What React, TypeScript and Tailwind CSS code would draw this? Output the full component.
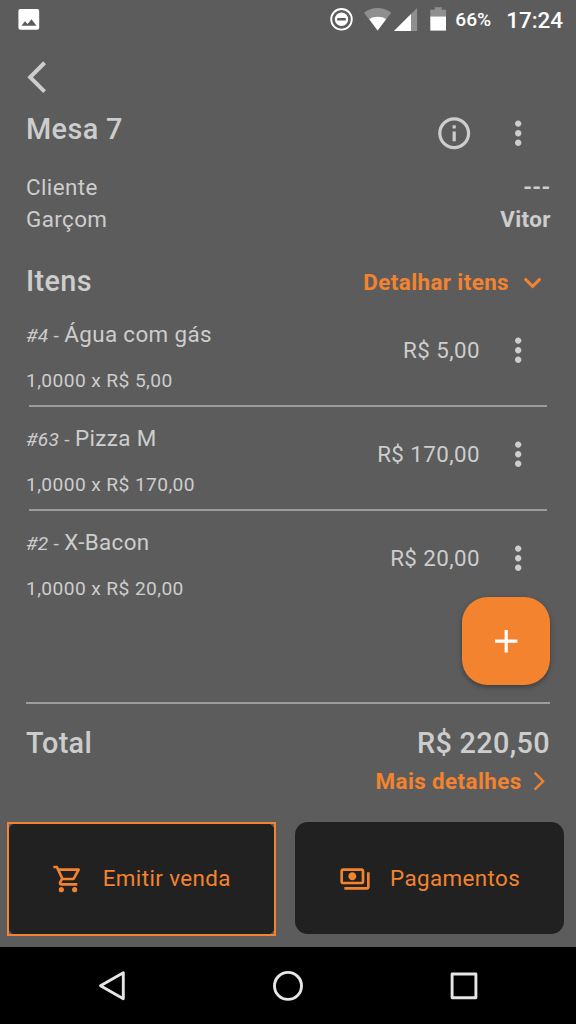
import type { ReactNode } from 'react';

type IconProps = { size: number; d: string; className?: string };

function Icon({ size, d, className = '' }: IconProps) {
  return (
    <svg width={size} height={size} viewBox="0 0 24 24" fill="currentColor" className={`block shrink-0 ${className}`}>
      <path d={d} />
    </svg>
  );
}

const paths = {
  back: 'M17.51 3.87L15.73 2.1 5.84 12l9.9 9.9 1.77-1.77L9.38 12z',
  forward: 'M6.23 20.23L8 22l10-10L8 2 6.23 3.77 14.46 12z',
  info: 'M11 7h2v2h-2V7zm0 4h2v6h-2v-6zm1-9C6.48 2 2 6.48 2 12s4.48 10 10 10 10-4.48 10-10S17.52 2 12 2zm0 18c-4.41 0-8-3.59-8-8s3.59-8 8-8 8 3.59 8 8-3.59 8-8 8z',
  more: 'M12 8c1.1 0 2-.9 2-2s-.9-2-2-2-2 .9-2 2 .9 2 2 2zm0 2c-1.1 0-2 .9-2 2s.9 2 2 2 2-.9 2-2-.9-2-2-2zm0 6c-1.1 0-2 .9-2 2s.9 2 2 2 2-.9 2-2-.9-2-2-2z',
  expand: 'M16.59 8.59L12 13.17 7.41 8.59 6 10l6 6 6-6z',
  add: 'M19 13h-6v6h-2v-6H5v-2h6V5h2v6h6v2z',
  cart: 'M15.55 13c.75 0 1.41-.41 1.75-1.03l3.58-6.49c.37-.66-.11-1.48-.87-1.48H5.21l-.94-2H1v2h2l3.6 7.59-1.35 2.44C4.52 15.37 5.48 17 7 17h12v-2H7l1.1-2h7.45zM6.16 6h12.15l-2.76 5H8.53L6.16 6zM7 18c-1.1 0-1.99.9-1.99 2S5.9 22 7 22s2-.9 2-2-.9-2-2-2zm10 0c-1.1 0-1.99.9-1.99 2s.89 2 1.99 2 2-.9 2-2-.9-2-2-2z',
  payments:
    'M19 14V6c0-1.1-.9-2-2-2H3c-1.1 0-2 .9-2 2v8c0 1.1.9 2 2 2h14c1.1 0 2-.9 2-2zm-2 0H3V6h14v8zm-7-7c-1.66 0-3 1.34-3 3s1.34 3 3 3 3-1.34 3-3-1.34-3-3-3zm13 0v11c0 1.1-.9 2-2 2H4v-2h17V7h2z',
};

const items = [
  { code: '#4', name: 'Água com gás', detail: '1,0000 x R$ 5,00', price: 'R$ 5,00' },
  { code: '#63', name: 'Pizza M', detail: '1,0000 x R$ 170,00', price: 'R$ 170,00' },
  { code: '#2', name: 'X-Bacon', detail: '1,0000 x R$ 20,00', price: 'R$ 20,00' },
];

function StatusBar() {
  return (
    <div className="flex h-[39px] shrink-0 items-center pr-[13px] pl-[18px] text-white">
      <svg width="22" height="39" viewBox="18 0 22 39" className="block">
        <rect x="18.4" y="8.9" width="20.8" height="20.8" rx="2" fill="#fff" />
        <path d="M21.4 25.8L25 21.2l2.6 2.9 3.9-4.8 5 6.5z" fill="#5c5c5c" />
      </svg>
      <svg width="118" height="39" viewBox="329 0 118 39" className="ml-auto block">
        <circle cx="341.5" cy="19.3" r="10.3" fill="none" stroke="#fff" strokeWidth="1.9" />
        <circle cx="341.5" cy="19.3" r="6.7" fill="#fff" />
        <rect x="337.2" y="18.1" width="8.6" height="2.4" rx="0.6" fill="#5c5c5c" />
        <path d="M364 12.8C371.5 6.4 383.8 6.4 391.3 12.8L377.6 30.6z" fill="#8f8f8f" />
        <path d="M369.3 19.2C373.6 16 381.8 16 386.1 19.2L377.6 30.6z" fill="#fff" />
        <path d="M394 31L417.1 8V31z" fill="#8f8f8f" />
        <path d="M394 31L411 14V31z" fill="#fff" />
        <path d="M434.6 7.2h7v2.5h4.4v7h-15.7v-7h4.3z" fill="#8f8f8f" />
        <path d="M430.3 16.5H446v14.1h-15.7z" fill="#fff" />
      </svg>
      <span className="ml-[8px] pt-[2px] text-[19.2px] font-medium">66%</span>
      <span className="ml-[15px] pt-[2px] text-[22.4px] font-medium">17:24</span>
    </div>
  );
}

function InfoRow({ label, value }: { label: string; value: string }) {
  return (
    <div className="flex h-8 items-center justify-between pr-[25.2px] pl-[26px] text-[22.4px] tracking-[0.4px]">
      <span>{label}</span>
      <span className="font-bold">{value}</span>
    </div>
  );
}

function ItemRow({ item, last }: { item: (typeof items)[number]; last: boolean }) {
  return (
    <li className="flex h-[104px] flex-col">
      <div className="flex h-[92px] shrink-0 items-center pr-[39px] pl-[26px]">
        <div className="flex h-[72px] flex-1 translate-y-[7px] flex-col justify-between">
          <div className="text-[22.4px] leading-[26px] tracking-[0.37px]">
            <span className="text-[19.2px] tracking-[0.3px]">
              <em>{item.code}</em> -{' '}
            </span>
            {item.name}
          </div>
          <div className="text-[19.2px] leading-[24px] tracking-[0.4px]">{item.detail}</div>
        </div>
        <span className="pt-[2px] text-[22.4px] tracking-[0.4px]">{item.price}</span>
        <Icon size={38.4} d={paths.more} className="ml-[18.6px]" />
      </div>
      {!last && <div className="mx-[29px] mt-[9px] h-[1.6px] shrink-0 bg-[#9c9c9c]" />}
    </li>
  );
}

function ActionLabel({ icon, children }: { icon: string; children: ReactNode }) {
  return (
    <>
      <Icon size={32} d={icon} />
      <span className="text-[22.4px] tracking-[0.4px]">{children}</span>
    </>
  );
}

function NavBar() {
  return (
    <nav className="flex h-[77px] shrink-0 items-center justify-around bg-black px-6 text-[#e6e6e6]">
      <svg width="32" height="32" viewBox="0 0 32 32" fill="none" stroke="currentColor" strokeWidth="2.9" strokeLinejoin="round" className="block">
        <path d="M4.5 15.7L27.3 2.8v26z" />
      </svg>
      <svg width="32" height="32" viewBox="0 0 32 32" fill="none" stroke="currentColor" strokeWidth="2.9" className="block">
        <circle cx="16" cy="15.9" r="13.5" />
      </svg>
      <svg width="32" height="32" viewBox="0 0 32 32" fill="none" stroke="currentColor" strokeWidth="2.9" strokeLinejoin="round" className="block">
        <rect x="4.1" y="4" width="23.8" height="23.8" />
      </svg>
    </nav>
  );
}

export default function App() {
  return (
    <div className="relative flex h-[1024px] w-[576px] flex-col overflow-hidden bg-[#5c5c5c] font-['Roboto',sans-serif] whitespace-nowrap text-[#cdcdcd]">
      <StatusBar />

      <header className="flex h-[133px] shrink-0 flex-col">
        <div className="flex h-[75px] items-center pt-px pl-[17.7px]">
          <Icon size={38.4} d={paths.back} />
        </div>
        <div className="flex h-[38px] items-center pr-[38.6px] pl-[26px]">
          <h1 className="-mt-[6px] flex-1 text-[28.8px] font-medium tracking-[0.4px]">Mesa 7</h1>
          <Icon size={38.4} d={paths.info} />
          <Icon size={38.4} d={paths.more} className="ml-[25.6px]" />
        </div>
      </header>

      <section className="shrink-0">
        <InfoRow label="Cliente" value="---" />
        <InfoRow label="Garçom" value="Vitor" />
      </section>

      <div className="mt-[24px] flex h-[44px] shrink-0 items-center pr-[25.4px] pl-[26px]">
        <h2 className="flex-1 text-[28.8px] font-medium tracking-[0.4px]">Itens</h2>
        <button className="flex items-center gap-[6.4px] pt-px text-[22.4px] font-bold tracking-[0.4px] text-[#f3832f]">
          Detalhar itens
          <Icon size={35.2} d={paths.expand} />
        </button>
      </div>

      <ul className="flex-1">
        {items.map((item, i) => (
          <ItemRow key={item.code} item={item} last={i === items.length - 1} />
        ))}
      </ul>

      <section className="mx-[26px] flex h-[120px] shrink-0 flex-col">
        <div className="h-[1.6px] shrink-0 bg-[#9c9c9c]" />
        <div className="mt-[21px] flex h-[38px] items-center justify-between text-[28.8px] font-medium tracking-[0.35px]">
          <span>Total</span>
          <span>R$ 220,50</span>
        </div>
        <button className="flex h-[38px] items-center justify-end gap-[6px] text-[22.4px] font-bold tracking-[0.4px] text-[#f3832f]">
          Mais detalhes
          <Icon size={22.4} d={paths.forward} />
        </button>
      </section>

      <div className="flex h-[125px] shrink-0 items-start justify-between pr-[12px] pl-[7px] text-[#f3832f]">
        <div className="h-[114px] w-[269px] outline-[2.5px] -outline-offset-[2.5px] outline-[#f3832f]">
          <button className="flex h-full w-full items-center gap-[19px] rounded-[12.8px] bg-[#212121] pl-[44.7px]">
            <ActionLabel icon={paths.cart}>Emitir venda</ActionLabel>
          </button>
        </div>
        <button className="flex h-[112.4px] w-[269px] items-center gap-[19px] rounded-[12.8px] bg-[#212121] pt-px pl-[44px]">
          <ActionLabel icon={paths.payments}>Pagamentos</ActionLabel>
        </button>
      </div>

      <NavBar />

      <button className="absolute top-[597px] left-[462.4px] flex h-[88px] w-[88px] items-center justify-center rounded-[25.6px] bg-[#f3832f] text-white shadow-[0_2px_5px_rgba(0,0,0,0.35)]">
        <Icon size={38.4} d={paths.add} />
      </button>
    </div>
  );
}
